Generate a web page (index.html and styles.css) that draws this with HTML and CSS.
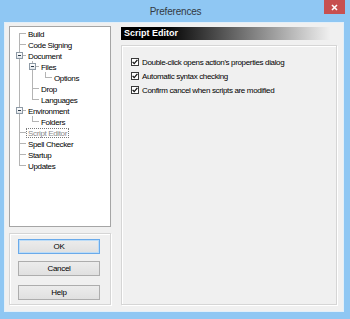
FILE: index.html
```html
<!DOCTYPE html>
<html>
<head>
<meta charset="utf-8">
<title>Preferences</title>
<link rel="stylesheet" href="styles.css">
</head>
<body>
<div class="window">
  <div class="titlebar">
    <span></span>
    <span class="title">Preferences</span>
    <button class="close" aria-label="Close">
      <svg width="7" height="7" viewBox="0 0 7 7"><path d="M1 1L6 6M6 1L1 6" stroke="#fff" stroke-width="1.6"/></svg>
    </button>
  </div>
  <div class="client">
    <div class="left">
      <div class="tree">
        <div class="row"><span class="cell first"></span><span class="label">Build</span></div>
        <div class="row"><span class="cell tee"></span><span class="label">Code Signing</span></div>
        <div class="row"><span class="cell tee"><span class="box"></span></span><span class="label">Document</span></div>
        <div class="row"><span class="cell pipe"></span><span class="cell tee"><span class="box"></span></span><span class="label">Files</span></div>
        <div class="row"><span class="cell pipe"></span><span class="cell pipe"></span><span class="cell end"></span><span class="label">Options</span></div>
        <div class="row"><span class="cell pipe"></span><span class="cell tee"></span><span class="label">Drop</span></div>
        <div class="row"><span class="cell pipe"></span><span class="cell end"></span><span class="label">Languages</span></div>
        <div class="row"><span class="cell tee"><span class="box"></span></span><span class="label">Environment</span></div>
        <div class="row"><span class="cell pipe"></span><span class="cell end"></span><span class="label">Folders</span></div>
        <div class="row"><span class="cell tee"></span><span class="label selected">Script Editor</span></div>
        <div class="row"><span class="cell tee"></span><span class="label">Spell Checker</span></div>
        <div class="row"><span class="cell tee"></span><span class="label">Startup</span></div>
        <div class="row"><span class="cell end"></span><span class="label">Updates</span></div>
      </div>
      <div class="buttons group">
        <button class="btn default">OK</button>
        <button class="btn">Cancel</button>
        <button class="btn">Help</button>
      </div>
    </div>
    <div class="right">
      <div class="header">Script Editor</div>
      <div class="options group">
        <label class="check"><span class="cb"><svg width="6" height="6" viewBox="0 0 6 6"><path d="M0.6 2.9L2.2 4.6L5.4 0.9" fill="none" stroke="#111" stroke-width="1.3"/></svg></span>Double-click opens action's properties dialog</label>
        <label class="check"><span class="cb"><svg width="6" height="6" viewBox="0 0 6 6"><path d="M0.6 2.9L2.2 4.6L5.4 0.9" fill="none" stroke="#111" stroke-width="1.3"/></svg></span>Automatic syntax checking</label>
        <label class="check"><span class="cb"><svg width="6" height="6" viewBox="0 0 6 6"><path d="M0.6 2.9L2.2 4.6L5.4 0.9" fill="none" stroke="#111" stroke-width="1.3"/></svg></span>Confirm cancel when scripts are modified</label>
      </div>
    </div>
  </div>
</div>
</body>
</html>
```

FILE: styles.css
```css
* { box-sizing: border-box; }
html, body { margin: 0; padding: 0; }
body {
  width: 350px;
  height: 319px;
  overflow: hidden;
  background: #8fc7f3;
  font-family: "Liberation Sans", Arial, sans-serif;
  font-size: 8px;
  color: #000;
}
.window {
  width: 350px;
  height: 319px;
  display: flex;
  flex-direction: column;
}
.titlebar {
  height: 22px;
  flex: none;
  display: grid;
  grid-template-columns: 1fr auto 1fr;
  align-items: center;
}
.title {
  font-size: 10px;
  letter-spacing: -0.2px;
  color: #333a44;
  padding-left: 1px;
}
.close {
  justify-self: end;
  align-self: start;
  margin-right: 5px;
  width: 21px;
  height: 14px;
  border: 0;
  padding: 0;
  background: #c75050;
  display: flex;
  align-items: center;
  justify-content: center;
}
.client {
  flex: 1;
  margin: 0 6px 7px 4px;
  background: #f0f0f0;
  border: 1px solid #e2eff9;
  padding: 3px 6px 6px 4px;
  display: grid;
  grid-template-columns: 102px 1fr;
  column-gap: 10px;
}
.left {
  display: flex;
  flex-direction: column;
  gap: 6px;
}
.tree {
  flex: 1;
  background: #fff;
  border: 1px solid #a5a5a5;
  padding: 1px 0 0 3px;
  letter-spacing: -0.35px;
}
.row {
  display: flex;
  height: 11px;
  align-items: center;
}
.cell {
  width: 13px;
  height: 11px;
  flex: none;
  display: flex;
  align-items: center;
  justify-content: center;
  background-repeat: no-repeat;
}
.pipe {
  background-image: linear-gradient(#b4b4b4, #b4b4b4);
  background-position: 6px 0;
  background-size: 1px 11px;
}
.tee {
  background-image: linear-gradient(#b4b4b4, #b4b4b4), linear-gradient(#b4b4b4, #b4b4b4);
  background-position: 6px 0, 6px 5px;
  background-size: 1px 11px, 7px 1px;
}
.first {
  background-image: linear-gradient(#b4b4b4, #b4b4b4), linear-gradient(#b4b4b4, #b4b4b4);
  background-position: 6px 5px, 6px 5px;
  background-size: 1px 6px, 7px 1px;
}
.end {
  background-image: linear-gradient(#b4b4b4, #b4b4b4), linear-gradient(#b4b4b4, #b4b4b4);
  background-position: 6px 0, 6px 5px;
  background-size: 1px 6px, 7px 1px;
}
.box {
  width: 7px;
  height: 7px;
  border: 1px solid #8e9aa6;
  background: linear-gradient(#2a3a4a, #2a3a4a) center / 3px 1px no-repeat, linear-gradient(#ffffff, #e2e6ea);
  margin-right: 1px;
}
.label {
  height: 10px;
  line-height: 9px;
  padding: 0 1px;
  border: 1px solid transparent;
  white-space: nowrap;
}
.label.selected {
  color: #8a8a8a;
  border: 1px dotted #7a7a7a;
}
.group {
  border: 1px solid #d5d5d5;
  box-shadow: inset 1px 1px 0 #fff, 1px 1px 0 #fff;
}
.buttons {
  height: 72px;
  flex: none;
  display: flex;
  flex-direction: column;
  gap: 7px;
  padding: 5px 0 0 8px;
}
.btn {
  width: 82px;
  height: 15px;
  padding: 0;
  font-family: "Liberation Sans", Arial, sans-serif;
  font-size: 8px;
  letter-spacing: -0.3px;
  color: #000;
  background: linear-gradient(#ececec, #e0e0e0);
  border: 1px solid #adadad;
}
.btn.default {
  border: 1px solid #6aaaea;
  box-shadow: inset 0 0 0 1px #bcdcf7;
}
.btn + .btn + .btn { margin-top: 2px; }
.right {
  display: flex;
  flex-direction: column;
  padding-top: 1px;
  gap: 5px;
}
.header {
  height: 13px;
  flex: none;
  padding-left: 3px;
  background: linear-gradient(to right, #000 0%, #000 20%, #f0f0f0 97%);
  color: #fff;
  font-weight: bold;
  font-size: 9px;
  line-height: 13px;
}
.options {
  flex: 1;
  padding: 11px 0 0 9px;
  display: flex;
  flex-direction: column;
  gap: 4px;
  letter-spacing: -0.35px;
}
.check {
  display: flex;
  align-items: center;
  height: 10px;
  gap: 3px;
  white-space: nowrap;
}
.cb {
  width: 8px;
  height: 8px;
  flex: none;
  border: 1px solid #3a3a3a;
  background: #fff;
  display: flex;
  align-items: center;
  justify-content: center;
}
.cb svg { display: block; }
```
